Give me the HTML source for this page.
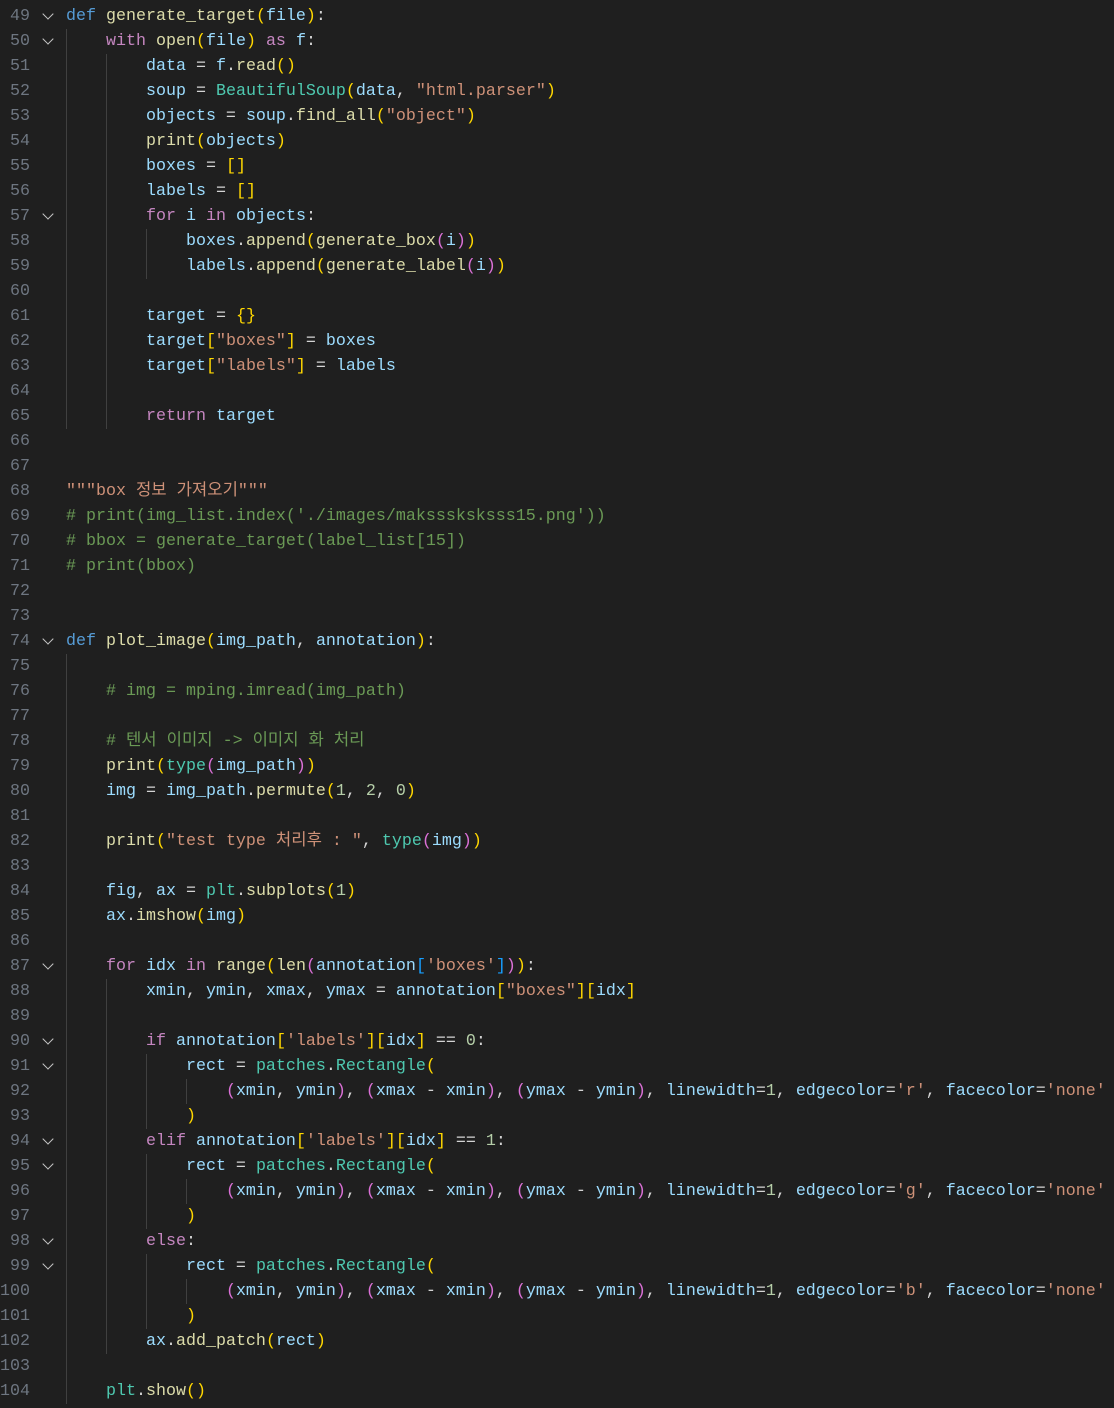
<!DOCTYPE html>
<html><head><meta charset="utf-8"><style>
body{margin:0;background:#1f1f1f;width:1114px;height:1408px;overflow:hidden;font-family:"Liberation Mono","Noto Sans CJK KR",monospace;font-size:16.67px;}
.l{position:absolute;left:0;height:25px;line-height:25px;white-space:pre;width:1114px}
.n{position:absolute;left:0;width:30px;text-align:right;color:#6e7681}
.t{position:absolute;left:66px;color:#d4d4d4}
.ch{position:absolute;left:44px;top:6px;width:7px;height:7px;border-right:1.5px solid #c5c5c5;border-bottom:1.5px solid #c5c5c5;transform:rotate(45deg)}
.g{position:absolute;top:0;width:1px;height:25px;background:#404040}
.k{color:#569cd6}.p{color:#c586c0}.f{color:#dcdcaa}.v{color:#9cdcfe}.c{color:#4ec9b0}.s{color:#ce9178}.m{color:#6a9955}.u{color:#b5cea8}.y{color:#ffd700}.q{color:#da70d6}.b{color:#179fff}
</style></head><body>
<div id="c"></div>
<script>
const L=[
[49,1,[],'<span class="k">def</span> <span class="f">generate_target</span><span class="y">(</span><span class="v">file</span><span class="y">)</span>:'],
[50,1,[0],'    <span class="p">with</span> <span class="f">open</span><span class="y">(</span><span class="v">file</span><span class="y">)</span> <span class="p">as</span> <span class="v">f</span>:'],
[51,0,[0,1],'        <span class="v">data</span> = <span class="v">f</span>.<span class="f">read</span><span class="y">()</span>'],
[52,0,[0,1],'        <span class="v">soup</span> = <span class="c">BeautifulSoup</span><span class="y">(</span><span class="v">data</span>, <span class="s">"html.parser"</span><span class="y">)</span>'],
[53,0,[0,1],'        <span class="v">objects</span> = <span class="v">soup</span>.<span class="f">find_all</span><span class="y">(</span><span class="s">"object"</span><span class="y">)</span>'],
[54,0,[0,1],'        <span class="f">print</span><span class="y">(</span><span class="v">objects</span><span class="y">)</span>'],
[55,0,[0,1],'        <span class="v">boxes</span> = <span class="y">[]</span>'],
[56,0,[0,1],'        <span class="v">labels</span> = <span class="y">[]</span>'],
[57,1,[0,1],'        <span class="p">for</span> <span class="v">i</span> <span class="p">in</span> <span class="v">objects</span>:'],
[58,0,[0,1,2],'            <span class="v">boxes</span>.<span class="f">append</span><span class="y">(</span><span class="f">generate_box</span><span class="q">(</span><span class="v">i</span><span class="q">)</span><span class="y">)</span>'],
[59,0,[0,1,2],'            <span class="v">labels</span>.<span class="f">append</span><span class="y">(</span><span class="f">generate_label</span><span class="q">(</span><span class="v">i</span><span class="q">)</span><span class="y">)</span>'],
[60,0,[0,1],''],
[61,0,[0,1],'        <span class="v">target</span> = <span class="y">{}</span>'],
[62,0,[0,1],'        <span class="v">target</span><span class="y">[</span><span class="s">"boxes"</span><span class="y">]</span> = <span class="v">boxes</span>'],
[63,0,[0,1],'        <span class="v">target</span><span class="y">[</span><span class="s">"labels"</span><span class="y">]</span> = <span class="v">labels</span>'],
[64,0,[0,1],''],
[65,0,[0,1],'        <span class="p">return</span> <span class="v">target</span>'],
[66,0,[],''],[67,0,[],''],
[68,0,[],'<span class="s">"""box 정보 가져오기"""</span>'],
[69,0,[],'<span class="m"># print(img_list.index(\'./images/maksssksksss15.png\'))</span>'],
[70,0,[],'<span class="m"># bbox = generate_target(label_list[15])</span>'],
[71,0,[],'<span class="m"># print(bbox)</span>'],
[72,0,[],''],[73,0,[],''],
[74,1,[],'<span class="k">def</span> <span class="f">plot_image</span><span class="y">(</span><span class="v">img_path</span>, <span class="v">annotation</span><span class="y">)</span>:'],
[75,0,[0],''],
[76,0,[0],'    <span class="m"># img = mping.imread(img_path)</span>'],
[77,0,[0],''],
[78,0,[0],'    <span class="m"># 텐서 이미지 -&gt; 이미지 화 처리</span>'],
[79,0,[0],'    <span class="f">print</span><span class="y">(</span><span class="c">type</span><span class="q">(</span><span class="v">img_path</span><span class="q">)</span><span class="y">)</span>'],
[80,0,[0],'    <span class="v">img</span> = <span class="v">img_path</span>.<span class="f">permute</span><span class="y">(</span><span class="u">1</span>, <span class="u">2</span>, <span class="u">0</span><span class="y">)</span>'],
[81,0,[0],''],
[82,0,[0],'    <span class="f">print</span><span class="y">(</span><span class="s">"test type 처리후 : "</span>, <span class="c">type</span><span class="q">(</span><span class="v">img</span><span class="q">)</span><span class="y">)</span>'],
[83,0,[0],''],
[84,0,[0],'    <span class="v">fig</span>, <span class="v">ax</span> = <span class="c">plt</span>.<span class="f">subplots</span><span class="y">(</span><span class="u">1</span><span class="y">)</span>'],
[85,0,[0],'    <span class="v">ax</span>.<span class="f">imshow</span><span class="y">(</span><span class="v">img</span><span class="y">)</span>'],
[86,0,[0],''],
[87,1,[0],'    <span class="p">for</span> <span class="v">idx</span> <span class="p">in</span> <span class="f">range</span><span class="y">(</span><span class="f">len</span><span class="q">(</span><span class="v">annotation</span><span class="b">[</span><span class="s">\'boxes\'</span><span class="b">]</span><span class="q">)</span><span class="y">)</span>:'],
[88,0,[0,1],'        <span class="v">xmin</span>, <span class="v">ymin</span>, <span class="v">xmax</span>, <span class="v">ymax</span> = <span class="v">annotation</span><span class="y">[</span><span class="s">"boxes"</span><span class="y">][</span><span class="v">idx</span><span class="y">]</span>'],
[89,0,[0,1],''],
[90,1,[0,1],'        <span class="p">if</span> <span class="v">annotation</span><span class="y">[</span><span class="s">\'labels\'</span><span class="y">][</span><span class="v">idx</span><span class="y">]</span> == <span class="u">0</span>:'],
[91,1,[0,1,2],'            <span class="v">rect</span> = <span class="c">patches</span>.<span class="c">Rectangle</span><span class="y">(</span>'],
[92,0,[0,1,2,3],'                <span class="q">(</span><span class="v">xmin</span>, <span class="v">ymin</span><span class="q">)</span>, <span class="q">(</span><span class="v">xmax</span> - <span class="v">xmin</span><span class="q">)</span>, <span class="q">(</span><span class="v">ymax</span> - <span class="v">ymin</span><span class="q">)</span>, <span class="v">linewidth</span>=<span class="u">1</span>, <span class="v">edgecolor</span>=<span class="s">\'r\'</span>, <span class="v">facecolor</span>=<span class="s">\'none\'</span>'],
[93,0,[0,1,2],'            <span class="y">)</span>'],
[94,1,[0,1],'        <span class="p">elif</span> <span class="v">annotation</span><span class="y">[</span><span class="s">\'labels\'</span><span class="y">][</span><span class="v">idx</span><span class="y">]</span> == <span class="u">1</span>:'],
[95,1,[0,1,2],'            <span class="v">rect</span> = <span class="c">patches</span>.<span class="c">Rectangle</span><span class="y">(</span>'],
[96,0,[0,1,2,3],'                <span class="q">(</span><span class="v">xmin</span>, <span class="v">ymin</span><span class="q">)</span>, <span class="q">(</span><span class="v">xmax</span> - <span class="v">xmin</span><span class="q">)</span>, <span class="q">(</span><span class="v">ymax</span> - <span class="v">ymin</span><span class="q">)</span>, <span class="v">linewidth</span>=<span class="u">1</span>, <span class="v">edgecolor</span>=<span class="s">\'g\'</span>, <span class="v">facecolor</span>=<span class="s">\'none\'</span>'],
[97,0,[0,1,2],'            <span class="y">)</span>'],
[98,1,[0,1],'        <span class="p">else</span>:'],
[99,1,[0,1,2],'            <span class="v">rect</span> = <span class="c">patches</span>.<span class="c">Rectangle</span><span class="y">(</span>'],
[100,0,[0,1,2,3],'                <span class="q">(</span><span class="v">xmin</span>, <span class="v">ymin</span><span class="q">)</span>, <span class="q">(</span><span class="v">xmax</span> - <span class="v">xmin</span><span class="q">)</span>, <span class="q">(</span><span class="v">ymax</span> - <span class="v">ymin</span><span class="q">)</span>, <span class="v">linewidth</span>=<span class="u">1</span>, <span class="v">edgecolor</span>=<span class="s">\'b\'</span>, <span class="v">facecolor</span>=<span class="s">\'none\'</span>'],
[101,0,[0,1,2],'            <span class="y">)</span>'],
[102,0,[0,1],'        <span class="v">ax</span>.<span class="f">add_patch</span><span class="y">(</span><span class="v">rect</span><span class="y">)</span>'],
[103,0,[0],''],
[104,0,[0],'    <span class="c">plt</span>.<span class="f">show</span><span class="y">()</span>']
];
let h='';
for(const [n,ch,g,t] of L){
 const top=4+(n-49)*25;
 h+=`<div class="l" style="top:${top}px"><span class="n">${n}</span>${ch?'<span class="ch"></span>':''}${g.map(k=>`<span class="g" style="left:${66+40*k}px"></span>`).join('')}<span class="t">${t}</span></div>`;
}
document.getElementById('c').innerHTML=h;
</script>
</body></html>
